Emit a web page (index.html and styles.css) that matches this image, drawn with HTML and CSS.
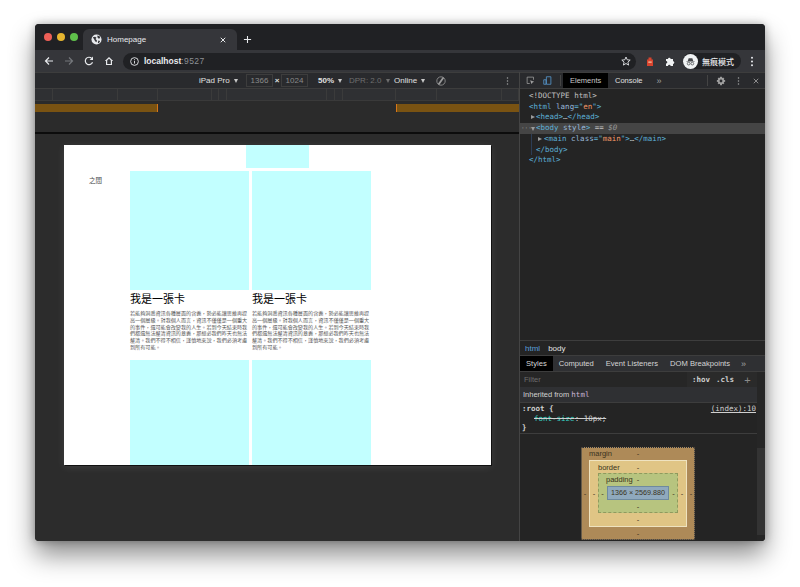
FILE: index.html
```html
<!DOCTYPE html>
<html lang="en">

<head>
    <meta charset="UTF-8" />
    <title>Homepage</title>
    <link rel="stylesheet" href="styles.css">
</head>

<body>
    <div class="window">
        <div class="tabstrip">
            <div class="lights">
                <span class="light red"></span>
                <span class="light yellow"></span>
                <span class="light green"></span>
            </div>
            <div class="tab">
                <svg class="favicon" viewBox="0 0 12 12">
                    <circle cx="6" cy="6" r="5.5" fill="#e8eaed" />
                    <path d="M2 3.500l2.500-.5 1.500 1-1 1.500 1.500 1.500-.5 2-1.500-1-1-2zM7 1.500l2.500 1 .5 2-2 .5-1-1.500zM8 7l2 .5-1.500 2.500-1-.5z" fill="#35363a" />
                </svg>
                <span class="tab-title">Homepage</span>
                <svg class="tab-close" viewBox="0 0 8 8">
                    <path d="M1 1l6 6M7 1L1 7" stroke="#e8eaed" stroke-width="1.300" />
                </svg>
            </div>
            <svg class="new-tab" viewBox="0 0 10 10">
                <path d="M5 1v8M1 5h8" stroke="#e8eaed" stroke-width="1.200" />
            </svg>
        </div>

        <div class="toolbar">
            <svg class="nav-icon" viewBox="0 0 10 10">
                <path d="M9 5H1.500M5 1.500L1.500 5 5 8.500" fill="none" stroke="#e8eaed" stroke-width="1.200" />
            </svg>
            <svg class="nav-icon" viewBox="0 0 10 10">
                <path d="M1 5h7.500M5 1.500L8.500 5 5 8.500" fill="none" stroke="#74777b" stroke-width="1.200" />
            </svg>
            <svg class="nav-icon" viewBox="0 0 10 10">
                <path d="M8.500 6.200A3.700 3.700 0 1 1 7.700 2.400" fill="none" stroke="#e8eaed" stroke-width="1.200" />
                <path d="M9 .6v3.400H5.600z" fill="#e8eaed" />
            </svg>
            <svg class="nav-icon" viewBox="0 0 10 10">
                <path d="M5 1L.8 5H2v4h6V5h1.200zM3.200 8V4.500L5 2.700l1.800 1.800V8z" fill="#e8eaed" />
            </svg>
            <div class="omnibox">
                <svg class="info-icon" viewBox="0 0 10 10">
                    <circle cx="5" cy="5" r="4.300" fill="none" stroke="#e8eaed" />
                    <path d="M5 4.300v3M5 2.500v1" stroke="#e8eaed" />
                </svg>
                <span class="host">localhost</span><span class="port">:9527</span>
                <svg class="star-icon" viewBox="0 0 10 10">
                    <path d="M5 1l1.200 2.800 3 .3-2.300 2 .7 3L5 7.500 2.400 9.100l.7-3-2.300-2 3-.3z" fill="none" stroke="#e8eaed" stroke-width=".9" />
                </svg>
            </div>
            <svg class="ext-icon" viewBox="0 0 8 11">
                <path d="M2.500 1.500h3v2h1.500v6.500H1V3.500h1.500z" fill="#d9442e" />
                <path d="M2.300 5.500h3.400v1.300H2.300z" fill="#f3c9a5" />
            </svg>
            <svg class="puzzle-icon" viewBox="0 0 10 10">
                <path d="M1 3h2a1.300 1.300 0 0 1 2.600 0H8v2.300a1.300 1.300 0 0 1 0 2.600V10H5.600a1.300 1.300 0 0 0-2.600 0H1V7.500a1.300 1.300 0 0 0 0-2.600z" fill="#f1f3f4" />
            </svg>
            <div class="profile">
                <span class="avatar">
                    <svg viewBox="0 0 12 12">
                        <path d="M3 5.500l1-3h4l1 3zM1.500 5.800h9v.6h-9z" fill="#45474a" />
                        <circle cx="4" cy="8.300" r="1.500" fill="none" stroke="#45474a" stroke-width=".8" />
                        <circle cx="8" cy="8.300" r="1.500" fill="none" stroke="#45474a" stroke-width=".8" />
                    </svg>
                </span>
                <span class="profile-name">無痕模式</span>
            </div>
            <svg class="menu-icon" viewBox="0 0 4 12">
                <circle cx="2" cy="2" r="1.100" fill="#e8eaed" />
                <circle cx="2" cy="6" r="1.100" fill="#e8eaed" />
                <circle cx="2" cy="10" r="1.100" fill="#e8eaed" />
            </svg>
        </div>

        <div class="devtools-wrap">
            <div class="device-pane">
                <div class="device-bar">
                    <span class="device-item device-name">iPad Pro <i class="caret"></i></span>
                    <span class="size-input">1366</span>
                    <span class="times">×</span>
                    <span class="size-input">1024</span>
                    <span class="device-item zoom-level">50% <i class="caret"></i></span>
                    <span class="device-item dpr">DPR: 2.0 <i class="caret dim"></i></span>
                    <span class="device-item network">Online <i class="caret"></i></span>
                    <svg class="rotate-icon" viewBox="0 0 10 10">
                        <circle cx="5" cy="5" r="4.200" fill="none" stroke="#9a9a9a" stroke-width=".8" />
                        <path d="M2.500 8.500l5-7" stroke="#9a9a9a" stroke-width="1.800" />
                    </svg>
                    <svg class="more-icon" viewBox="0 0 4 12">
                        <circle cx="2" cy="2" r="1" fill="#a0a0a0" />
                        <circle cx="2" cy="6" r="1" fill="#a0a0a0" />
                        <circle cx="2" cy="10" r="1" fill="#a0a0a0" />
                    </svg>
                </div>
                <div class="ruler">
                    <div></div><div></div><div></div><div></div><div></div><div></div><div></div>
                    <div></div><div></div><div></div><div></div><div></div><div></div>
                </div>
                <div class="query-bar">
                    <div class="query-left"></div>
                    <div class="query-right"></div>
                </div>
                <div class="stage">
                    <div class="viewport">
                        <div class="hero-block"></div>
                        <div class="page-row">
                            <div class="side-label">之間</div>
                            <div class="cards">
                                <div class="card">
                                    <div class="card-img"></div>
                                    <h2>我是一張卡</h2>
                                    <p>若能夠洞悉資訊各種層面的含義&#65292;勢必能讓思維再提高一個層級。對我個人而言&#65292;資訊不僅僅是一個重大的事件&#65292;還可能會改變我的人生。若到今天結束時我們都還無法釐清資訊的意義&#65292;那想必我們昨天也無法釐清。我們不得不相信&#65292;謹慎地來說&#65292;我們必須考慮到所有可能。</p>
                                </div>
                                <div class="card">
                                    <div class="card-img"></div>
                                    <h2>我是一張卡</h2>
                                    <p>若能夠洞悉資訊各種層面的含義&#65292;勢必能讓思維再提高一個層級。對我個人而言&#65292;資訊不僅僅是一個重大的事件&#65292;還可能會改變我的人生。若到今天結束時我們都還無法釐清資訊的意義&#65292;那想必我們昨天也無法釐清。我們不得不相信&#65292;謹慎地來說&#65292;我們必須考慮到所有可能。</p>
                                </div>
                                <div class="card">
                                    <div class="card-img"></div>
                                </div>
                                <div class="card">
                                    <div class="card-img"></div>
                                </div>
                            </div>
                        </div>
                    </div>
                </div>
            </div>

            <div class="inspector">
                <div class="dt-bar">
                    <svg class="dt-icon" viewBox="0 0 12 12">
                        <path d="M10 5V1.500H1.500V10H5" fill="none" stroke="#a0a0a0" />
                        <path d="M5.500 5.500l5.500 2-2.300 1L7.500 11z" fill="#a0a0a0" />
                    </svg>
                    <svg class="dt-icon device-toggle" viewBox="0 0 12 12">
                        <path d="M4.500 1h6v10h-6zM1 5h3v6H1z" fill="none" stroke="#5a9fd8" />
                    </svg>
                    <span class="dt-sep"></span>
                    <span class="dt-tab active">Elements</span>
                    <span class="dt-tab">Console</span>
                    <span class="dt-more">»</span>
                    <span class="dt-sep sep-end"></span>
                    <svg class="dt-gear" viewBox="0 0 12 12">
                        <path d="M5 1h2l.3 1.500 1.300-.7 1.400 1.400-.7 1.300L11 5v2l-1.700.3.7 1.300-1.400 1.400-1.300-.7L7 11H5l-.3-1.700-1.300.7L2 8.600l.7-1.300L1 7V5l1.700-.5L2 3.200l1.400-1.400 1.300.7zM6 4.300a1.700 1.700 0 1 0 0 3.400 1.700 1.700 0 0 0 0-3.400z" fill="#a0a0a0" fill-rule="evenodd" />
                    </svg>
                    <svg class="dt-dots" viewBox="0 0 4 12">
                        <circle cx="2" cy="2" r="1" fill="#a0a0a0" />
                        <circle cx="2" cy="6" r="1" fill="#a0a0a0" />
                        <circle cx="2" cy="10" r="1" fill="#a0a0a0" />
                    </svg>
                    <svg class="dt-close" viewBox="0 0 8 8">
                        <path d="M1 1l6 6M7 1L1 7" stroke="#a0a0a0" stroke-width="1.100" />
                    </svg>
                </div>

                <div class="dom-tree">
                    <div class="dom-line level-0 doctype">&lt;!DOCTYPE html&gt;</div>
                    <div class="dom-line level-0"><span class="tag">&lt;html</span> <span class="attr">lang</span><span class="tag">="</span><span class="val">en</span><span class="tag">"&gt;</span></div>
                    <div class="dom-line level-1"><i class="arrow right"></i><span class="tag">&lt;head&gt;</span><span class="plain">…</span><span class="tag">&lt;/head&gt;</span></div>
                    <div class="dom-line level-1 selected"><span class="gutter">···</span><i class="arrow down"></i><span class="tag">&lt;body</span> <span class="attr">style</span><span class="tag">&gt;</span> <span class="plain">== <em>$0</em></span></div>
                    <div class="dom-line level-2 guide"><i class="arrow right"></i><span class="tag">&lt;main</span> <span class="attr">class</span><span class="tag">="</span><span class="val">main</span><span class="tag">"&gt;</span><span class="plain">…</span><span class="tag">&lt;/main&gt;</span></div>
                    <div class="dom-line level-1 guide-close"><span class="tag">&lt;/body&gt;</span></div>
                    <div class="dom-line level-0"><span class="tag">&lt;/html&gt;</span></div>
                </div>

                <div class="crumbs">
                    <span class="crumb-link">html</span>
                    <span>body</span>
                </div>
                <div class="side-tabs">
                    <span class="side-tab active">Styles</span>
                    <span class="side-tab">Computed</span>
                    <span class="side-tab">Event Listeners</span>
                    <span class="side-tab">DOM Breakpoints</span>
                    <span class="side-more">»</span>
                </div>
                <div class="styles-body">
                    <div class="styles-main">
                        <div class="filter-row">
                            <span class="filter-box">Filter</span>
                            <span class="filter-btn">:hov</span>
                            <span class="filter-btn">.cls</span>
                            <span class="filter-plus">+</span>
                        </div>
                        <div class="inherited">Inherited from <code>html</code></div>
                        <div class="rule">
                            <div class="rule-head"><span>:root {</span><a class="rule-src">(index):10</a></div>
                            <div class="rule-prop"><span class="prop-name">font-size</span>: 10px;</div>
                            <div>}</div>
                        </div>
                        <div class="box-wrap">
                            <div class="box box-margin">
                                <div class="box-top"><span class="box-label">margin</span>-</div>
                                <div class="box-side">-</div>
                                <div class="box box-border">
                                    <div class="box-top"><span class="box-label">border</span>-</div>
                                    <div class="box-side">-</div>
                                    <div class="box box-padding">
                                        <div class="box-top"><span class="box-label">padding</span>-</div>
                                        <div class="box-side">-</div>
                                        <div class="box-content">1366 × 2569.880</div>
                                        <div class="box-side">-</div>
                                        <div class="box-bottom">-</div>
                                    </div>
                                    <div class="box-side">-</div>
                                    <div class="box-bottom">-</div>
                                </div>
                                <div class="box-side">-</div>
                                <div class="box-bottom">-</div>
                            </div>
                        </div>
                    </div>
                    <div class="styles-scroll">
                        <div class="scroll-thumb"></div>
                    </div>
                </div>
            </div>
        </div>
    </div>
</body>

</html>
```

FILE: styles.css
```css
* {
    box-sizing: border-box;
}

body {
    margin: 0;
    height: 587px;
    padding: 24px 35px 0;
    background-color: #fff;
    font-family: "Liberation Sans", "Noto Sans CJK TC", sans-serif;
    overflow: hidden;
}

.window {
    display: flex;
    flex-direction: column;
    height: 517px;
    border-radius: 4px;
    overflow: hidden;
    background-color: #2b2b2b;
    box-shadow: 0 14px 26px rgba(0, 0, 0, 0.45), 0 0 8px rgba(0, 0, 0, 0.3);
}

/* tab strip */
.tabstrip {
    display: flex;
    align-items: flex-end;
    height: 26px;
    flex-shrink: 0;
    background-color: #202124;
}

.lights {
    display: flex;
    gap: 5px;
    align-self: flex-start;
    padding: 9px 0 0 9px;
    width: 48px;
}

.light {
    width: 8px;
    height: 8px;
    border-radius: 50%;
    flex-shrink: 0;
}

.red {
    background-color: #ed5f57;
}

.yellow {
    background-color: #e5b52f;
}

.green {
    background-color: #5fc04b;
}

.tab {
    display: flex;
    align-items: center;
    width: 154px;
    height: 21px;
    padding: 0 9px 0 8px;
    background-color: #35363a;
    border-radius: 6px 6px 0 0;
}

.favicon {
    width: 11px;
    height: 11px;
}

.tab-title {
    flex: 1;
    margin-left: 5px;
    color: #e8eaed;
    font-size: 8px;
}

.tab-close {
    width: 6px;
    height: 6px;
    margin-right: 2px;
}

.new-tab {
    width: 9px;
    height: 9px;
    margin: 0 0 6px 6px;
}

/* address bar */
.toolbar {
    display: flex;
    align-items: center;
    height: 22px;
    flex-shrink: 0;
    padding-left: 9px;
    background-color: #35363a;
}

.nav-icon {
    width: 10px;
    height: 10px;
    margin-right: 10px;
}

.omnibox {
    display: flex;
    align-items: center;
    width: 513px;
    height: 17px;
    margin-left: -1px;
    padding: 0 5px 0 7px;
    border-radius: 9px;
    background-color: #202124;
    font-size: 8.500px;
}

.info-icon {
    width: 9px;
    height: 9px;
    margin-right: 5px;
}

.host {
    color: #e8eaed;
    font-weight: bold;
}

.port {
    color: #8d9094;
    letter-spacing: 0.4px;
}

.star-icon {
    width: 10px;
    height: 10px;
    margin-left: auto;
}

.ext-icon {
    width: 8px;
    height: 11px;
    margin-left: 10px;
}

.puzzle-icon {
    width: 10px;
    height: 10px;
    margin-left: 11px;
}

.profile {
    display: flex;
    align-items: center;
    width: 58px;
    height: 16px;
    margin-left: 8px;
    border-radius: 8px;
    background-color: #202124;
}

.avatar {
    display: flex;
    align-items: center;
    justify-content: center;
    width: 15px;
    height: 15px;
    border-radius: 50%;
    background-color: #f1f3f4;
}

.avatar svg {
    width: 11px;
    height: 11px;
}

.profile-name {
    margin-left: 4px;
    color: #e8eaed;
    font-size: 8px;
    font-weight: 500;
}

.menu-icon {
    width: 4px;
    height: 11px;
    margin-left: 9px;
}

/* device mode side */
.devtools-wrap {
    display: flex;
    flex: 1;
    min-height: 0;
}

.device-pane {
    display: flex;
    flex-direction: column;
    width: 485px;
    flex-shrink: 0;
    border-right: 1px solid #444;
}

.device-bar {
    display: flex;
    align-items: center;
    height: 17px;
    flex-shrink: 0;
    padding-left: 164px;
    border-top: 1px solid #3d3d3d;
    border-bottom: 1px solid #3d3d3d;
    background-color: #292a2d;
    color: #e0e0e0;
    font-size: 8px;
}

.device-item {
    display: flex;
    align-items: center;
    gap: 2px;
    white-space: pre;
}

.caret {
    width: 0;
    height: 0;
    border-left: 2.500px solid transparent;
    border-right: 2.500px solid transparent;
    border-top: 4px solid #c8c8c8;
}

.caret.dim {
    border-top-color: #6e6e6e;
}

.device-name {
    width: 47px;
}

.size-input {
    width: 27px;
    height: 13px;
    line-height: 11px;
    border: 1px solid #3d3d3d;
    color: #8a8a8a;
    text-align: center;
}

.times {
    width: 8px;
    text-align: center;
    font-weight: bold;
}

.zoom-level {
    width: 31px;
    margin-left: 10px;
    font-weight: bold;
}

.dpr {
    width: 45px;
    color: #6f6f6f;
}

.network {
    width: 42px;
}

.rotate-icon {
    width: 10px;
    height: 10px;
}

.more-icon {
    width: 3px;
    height: 10px;
    margin-left: 60px;
}

.ruler {
    display: grid;
    grid-template-columns: 18px 65px 40px 54px 7px 8px 100px 8px 8px 53px 41px 65px 17px;
    height: 12px;
    flex-shrink: 0;
    border-bottom: 1px solid #3a3a3a;
    background-color: #2f3033;
}

.ruler div {
    border-right: 1px solid #3b3b3b;
}

.query-bar {
    display: flex;
    justify-content: space-between;
    height: 33px;
    flex-shrink: 0;
    padding-top: 3px;
    border-bottom: 2px solid #0c0c0c;
    background-color: #2b2b2b;
}

.query-left,
.query-right {
    height: 8px;
    background-color: #7a5312;
}

.query-left {
    width: 123px;
    border-right: 1px solid #d6761a;
}

.query-right {
    width: 123px;
    border-left: 1px solid #d6761a;
}

.stage {
    flex: 1;
    min-height: 0;
    padding: 11px 0 0 29px;
    background-color: #2c2c2c;
}

.viewport {
    width: 427px;
    height: 320px;
    overflow: hidden;
    background-color: #fff;
    box-shadow: 1px 1px 0 #111, 0 2px 8px rgba(255, 255, 255, 0.1);
}

.hero-block {
    width: 63px;
    height: 23px;
    margin-left: 182px;
    background-color: #c2ffff;
}

.page-row {
    display: flex;
    margin-top: 3px;
}

.side-label {
    width: 66px;
    padding: 4px 0 0 25px;
    color: #444;
    font-size: 6.500px;
}

.cards {
    display: grid;
    grid-template-columns: 119px 119px;
    gap: 0 3px;
}

.card {
    height: 189px;
}

.card-img {
    height: 119px;
    background-color: #c2ffff;
}

.card h2 {
    margin: 2px 0 0;
    color: #000;
    font-size: 11px;
    font-weight: 400;
    line-height: 14px;
}

.card p {
    margin: 4px 0 0;
    color: #555;
    font-size: 5.100px;
    line-height: 6.750px;
}

/* inspector */
.inspector {
    display: flex;
    flex-direction: column;
    width: 245px;
    flex-shrink: 0;
    background-color: #242424;
    color: #d0d0d0;
}

.dt-bar {
    display: flex;
    align-items: center;
    height: 17px;
    flex-shrink: 0;
    padding-left: 6px;
    border-top: 1px solid #3d3d3d;
    border-bottom: 1px solid #3d3d3d;
    background-color: #292a2d;
    font-size: 7.500px;
}

.dt-icon {
    width: 9px;
    height: 9px;
    margin-right: 8px;
}

.dt-sep {
    width: 1px;
    height: 11px;
    background-color: #444;
}

.dt-tab {
    display: flex;
    align-items: center;
    height: 15px;
    padding: 0 7px;
    color: #e0e0e0;
}

.dt-tab.active {
    width: 45px;
    margin-left: 2px;
    background-color: #000;
    color: #c8c8c8;
}

.dt-more {
    margin-left: 7px;
    color: #a0a0a0;
    font-size: 9px;
}

.sep-end {
    margin-left: 45px;
}

.dt-gear {
    width: 10px;
    height: 10px;
    margin-left: 8px;
}

.dt-dots {
    width: 3px;
    height: 10px;
    margin-left: 11px;
}

.dt-close {
    width: 6px;
    height: 6px;
    margin-left: 13px;
}

.dom-tree {
    height: 252px;
    flex-shrink: 0;
    padding-top: 2px;
    border-bottom: 1px solid #3d3d3d;
    font-family: "DejaVu Sans Mono", monospace;
    font-size: 7.500px;
    line-height: 10.700px;
}

.dom-line {
    position: relative;
    white-space: pre;
}

.level-0 {
    padding-left: 9px;
}

.level-1 {
    padding-left: 16px;
}

.level-2 {
    padding-left: 24px;
}

.doctype {
    color: #c0c0c0;
}

.tag {
    color: #5db0d7;
}

.attr {
    color: #9bbbdc;
}

.val {
    color: #f29766;
}

.plain {
    color: #c0c0c0;
}

.plain em {
    color: #9a9a9a;
}

.selected {
    background-color: #454545;
}

.gutter {
    position: absolute;
    left: 1px;
    color: #a0a0a0;
    font-size: 6px;
}

.arrow {
    position: absolute;
    width: 0;
    height: 0;
    top: 3px;
}

.level-1 .arrow {
    left: 11px;
}

.level-2 .arrow {
    left: 18px;
}

.arrow.right {
    border-top: 2.500px solid transparent;
    border-bottom: 2.500px solid transparent;
    border-left: 4px solid #9a9a9a;
}

.arrow.down {
    top: 4px;
    border-left: 2.500px solid transparent;
    border-right: 2.500px solid transparent;
    border-top: 4px solid #9a9a9a;
}

.guide::before,
.guide-close::before {
    content: "";
    position: absolute;
    left: 11px;
    top: 0;
    bottom: 0;
    border-left: 1px solid #2d3d55;
}

.crumbs {
    display: flex;
    align-items: center;
    gap: 8px;
    height: 15px;
    flex-shrink: 0;
    padding-left: 5px;
    border-bottom: 1px solid #3d3d3d;
    color: #e0e0e0;
    font-size: 8px;
}

.crumb-link {
    color: #5a9fd8;
}

.side-tabs {
    display: flex;
    align-items: center;
    height: 16px;
    flex-shrink: 0;
    background-color: #2f3033;
    border-bottom: 1px solid #3d3d3d;
    color: #d6d6d6;
    font-size: 7.600px;
}

.side-tab {
    display: flex;
    align-items: center;
    height: 15px;
    padding: 0 6px;
}

.side-tab.active {
    background-color: #000;
}

.side-more {
    margin-left: 5px;
    color: #a0a0a0;
    font-size: 9px;
}

.styles-body {
    display: flex;
    flex: 1;
    min-height: 0;
}

.styles-main {
    width: 237px;
    flex-shrink: 0;
    overflow: hidden;
}

.filter-row {
    display: flex;
    align-items: center;
    height: 15px;
    background-color: #2a2a2a;
    font-family: "DejaVu Sans Mono", monospace;
    font-size: 7.500px;
    color: #d0d0d0;
}

.filter-box {
    width: 167px;
    height: 15px;
    margin-right: 5px;
    padding-left: 4px;
    background-color: #262626;
    color: #6d6d6d;
    font-family: "Liberation Sans", sans-serif;
    line-height: 15px;
}

.filter-btn {
    margin-right: 6px;
    font-weight: bold;
}

.filter-plus {
    margin-left: 4px;
    color: #8a8a8a;
    font-family: "Liberation Sans", sans-serif;
    font-size: 11px;
}

.inherited {
    height: 16px;
    padding-left: 3px;
    border-bottom: 1px solid #3d3d3d;
    background-color: #2f3033;
    color: #d0d0d0;
    font-size: 7.500px;
    line-height: 15px;
}

.inherited code {
    color: #cbb6d6;
    font-family: "DejaVu Sans Mono", monospace;
}

.rule {
    height: 31px;
    padding: 1px 0 0 2px;
    border-bottom: 1px solid #3d3d3d;
    font-family: "DejaVu Sans Mono", monospace;
    font-size: 7.500px;
    line-height: 9.500px;
    font-weight: bold;
}

.rule-head {
    display: flex;
    justify-content: space-between;
    padding-right: 1px;
}

.rule-src {
    font-weight: normal;
    text-decoration: underline;
}

.rule-prop {
    padding-left: 12px;
    font-weight: normal;
    text-decoration: line-through;
}

.prop-name {
    color: #35d4c7;
}

.box-wrap {
    display: flex;
    justify-content: center;
    padding: 13px 1px 0 0;
}

.box {
    display: grid;
    color: #3a3320;
    font-size: 7.500px;
}

.box-margin {
    grid-template-columns: 8px 98px 8px;
    grid-template-rows: 13px 67px 13px;
    border-radius: 2px;
    outline: 1px dotted #1f2a3a;
    outline-offset: -1px;
    background-color: #ae8a58;
}

.box-border {
    grid-template-columns: 8px 80px 8px;
    grid-template-rows: 12px 40px 13px;
    border: 1px solid #efe3c0;
    background-color: #e0c585;
}

.box-padding {
    grid-template-columns: 9px 62px 9px;
    grid-template-rows: 13px 14px 13px;
    outline: 1px dashed #8f9a5e;
    outline-offset: -1px;
    background-color: #b7c47f;
}

.box-content {
    background-color: #8fa9bd;
    border: 1px solid #6e8a9e;
    text-align: center;
    line-height: 12px;
    white-space: nowrap;
    font-size: 7.200px;
}

.box-top {
    position: relative;
    grid-column: 1 / span 3;
    text-align: center;
    line-height: 13px;
}

.box-label {
    position: absolute;
    left: 8px;
    top: 0;
}

.box-bottom {
    grid-column: 1 / span 3;
    text-align: center;
    line-height: 13px;
}

.box-side {
    align-self: center;
    text-align: center;
}

.styles-scroll {
    flex: 1;
    padding-top: 76px;
    background-color: #262626;
}

.scroll-thumb {
    height: 87px;
    background-color: #333;
}
```
